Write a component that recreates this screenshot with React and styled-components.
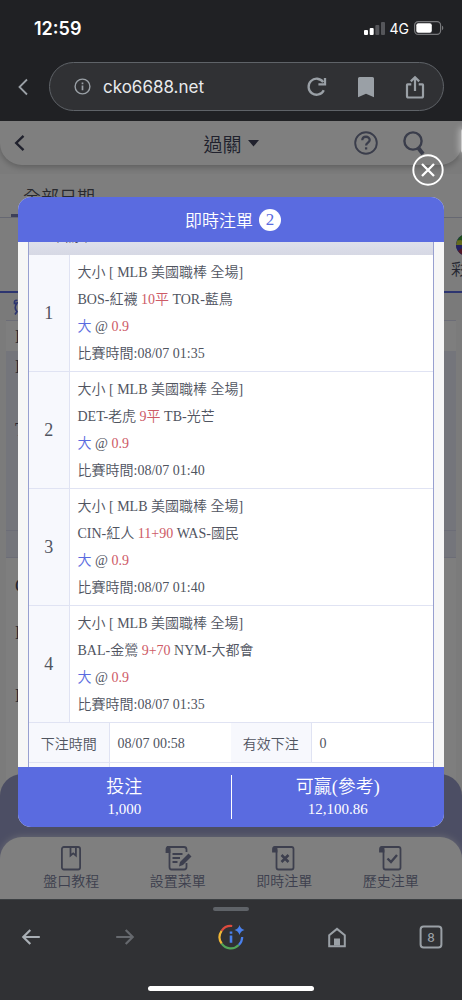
import { Fragment } from "react";
import styled, { createGlobalStyle } from "styled-components";

const accent = "#5a6be0";
const line = "#e0e3f3";
const chromeGrey = "#9aa0a6";
const ui = `Inter, "Noto Sans CJK TC", sans-serif`;
const serif = `"Liberation Serif", "Noto Sans CJK TC", serif`;

const GlobalStyle = createGlobalStyle`
  * {
    box-sizing: border-box;
  }

  body {
    margin: 0;
    background: #202124;
    font-family: ${serif};
    font-weight: 350;
  }

  button {
    padding: 0;
    border: none;
    background: none;
    font: inherit;
    color: inherit;
    cursor: pointer;
  }

  svg {
    display: block;
  }
`;

const Screen = styled.div`
  display: flex;
  flex-direction: column;
  height: 100vh;
  overflow: hidden;
`;

/* ---------- browser chrome ---------- */

const StatusBar = styled.div`
  display: flex;
  justify-content: space-between;
  align-items: center;
  height: 62px;
  padding: 0 18px 6px 34px;
  flex-shrink: 0;
  color: #fff;
  font-family: ${ui};
`;

const Clock = styled.span`
  font-size: 18px;
  font-weight: 600;
`;

const StatusIcons = styled.div`
  display: flex;
  align-items: center;
  gap: 5px;
  font-size: 14px;
  font-weight: 400;
`;

const AddressRow = styled.div`
  display: flex;
  align-items: center;
  padding: 0 18px 10px;
  flex-shrink: 0;
  color: ${chromeGrey};
`;

const BackButton = styled.button`
  width: 31px;
`;

const AddressPill = styled.div`
  display: flex;
  flex: 1;
  align-items: center;
  height: 49px;
  padding: 0 16px 0 24px;
  border: 1px solid #5f6368;
  border-radius: 25px;
  background: #303134;
`;

const Url = styled.span`
  flex: 1;
  padding-left: 12px;
  color: #e8eaed;
  font-family: ${ui};
  font-size: 17px;
  font-weight: 400;
`;

const PillButtons = styled.div`
  display: flex;
  gap: 25px;
`;

const Toolbar = styled.footer`
  display: flex;
  flex-direction: column;
  align-items: center;
  height: 101px;
  padding: 7px 19px 9px;
  flex-shrink: 0;
  border-top: 1px solid #3c4043;
  background: #303134;
  color: ${chromeGrey};
`;

const Grabber = styled.span`
  width: 36px;
  height: 4px;
  border-radius: 2px;
  background: #5f6368;
`;

const ToolbarButtons = styled.div`
  display: flex;
  justify-content: space-between;
  width: 100%;
  padding-top: 12px;
`;

const ToolbarGroup = styled.div`
  display: flex;
  gap: 80px;
`;

const HomeIndicator = styled.span`
  width: 166px;
  height: 5px;
  margin-top: auto;
  border-radius: 3px;
  background: #fff;
`;

/* ---------- page behind the dialog ---------- */

const Viewport = styled.main`
  position: relative;
  display: flex;
  flex-direction: column;
  flex: 1;
  min-height: 0;
  overflow: hidden;
  background: #f7f7f7;
  color: #4a4e63;
`;

const PageHeader = styled.header`
  display: flex;
  align-items: center;
  height: 44px;
  padding: 0 36px 0 14px;
  margin-bottom: 9px;
  flex-shrink: 0;
  border-radius: 0 0 22px 22px;
  background: #fff;
  box-shadow: 0 2px 6px rgba(0, 0, 0, 0.25);
`;

const HeaderSide = styled.div`
  display: flex;
  flex: 1;
  align-items: center;
  justify-content: ${({ $end }) => ($end ? "flex-end" : "flex-start")};
  gap: 24px;
  color: ${({ $end }) => ($end ? "#757b96" : "#40435a")};
`;

const PageTitle = styled.button`
  display: flex;
  align-items: center;
  gap: 6px;
  margin-left: 22px;
  color: #40435a;
  font-size: 19px;
`;

const EdgeHandle = styled.span`
  position: absolute;
  top: 8px;
  right: -4px;
  width: 5px;
  height: 24px;
  border-radius: 3px;
  background: #ccc;
  box-shadow: 0 0 6px 2px rgba(255, 255, 255, 0.4);
`;

const DateTabs = styled.div`
  display: flex;
  height: 44px;
  padding-left: 11px;
  flex-shrink: 0;
  border-bottom: 1px solid #cdd0e4;
  background: #fcfcfc;
`;

const DateTab = styled.button`
  padding: 3px 12px 0;
  border-bottom: 3px solid #7a80b0;
  color: #50525c;
  font-size: 18px;
`;

const SportTabs = styled.div`
  display: flex;
  justify-content: flex-end;
  height: 75px;
  flex-shrink: 0;
  border-bottom: 2px solid ${accent};
  background: #fafafa;
`;

const SportTab = styled.button`
  display: flex;
  flex-direction: column;
  align-items: center;
  padding-top: 16px;
  margin-right: -21px;
  font-size: 16px;
`;

const Notice = styled.div`
  height: 27px;
  padding: 6px 13px;
  flex-shrink: 0;
  background: #f5f5f5;
  color: ${accent};
`;

const MatchList = styled.div`
  margin: 0 6px;
  background: #fdfdfd;
  font-size: 18px;
`;

const MatchRow = styled.div`
  height: ${({ $height }) => $height}px;
  padding: 6px 9px;
  border-top: ${({ $plain }) => ($plain ? "none" : "1px solid #d8dbee")};
  background: ${({ $tint }) => ($tint ? "#e9ebf7" : "transparent")};
  line-height: 20px;
`;

const BottomPanel = styled.div`
  position: absolute;
  left: 0;
  right: 0;
  bottom: 0;
  padding-top: 63px;
  border-radius: 22px 22px 0 0;
  background: #999dc8;
`;

const BottomNav = styled.nav`
  display: grid;
  grid-template-columns: repeat(4, 1fr);
  height: 62px;
  padding: 9px 18px 0;
  border-radius: 22px 22px 0 0;
  background: #fff;
  box-shadow: 0 -1px 6px rgba(255, 255, 255, 0.5);
`;

const NavItem = styled.a`
  display: flex;
  flex-direction: column;
  align-items: center;
  color: #7a7f9c;
  font-size: 14px;
  line-height: 21px;
  text-decoration: none;
`;

/* ---------- dialog ---------- */

const Overlay = styled.div`
  position: absolute;
  inset: 0;
  display: flex;
  padding: 76px 18px 72px;
  background: rgba(0, 0, 0, 0.5);
`;

const CloseButton = styled.button`
  position: absolute;
  top: 33px;
  right: 18px;
`;

const Dialog = styled.section`
  display: flex;
  flex-direction: column;
  flex: 1;
  overflow: hidden;
  border-radius: 13px;
  background: #f6f6f6;
`;

const DialogTitle = styled.h2`
  display: flex;
  justify-content: center;
  align-items: center;
  gap: 6px;
  height: 45px;
  margin: 0;
  padding-left: 4px;
  flex-shrink: 0;
  background: ${accent};
  color: #fff;
  font-size: 17px;
  font-weight: 350;
`;

const Count = styled.span`
  width: 22px;
  height: 22px;
  border-radius: 50%;
  background: #fff;
  color: ${accent};
  line-height: 22px;
  text-align: center;
`;

const DialogBody = styled.div`
  flex: 1;
  min-height: 0;
  padding: 0 10px;
  overflow: hidden;
`;

const Slip = styled.div`
  margin-top: -24px;
  border: 1px solid #98a0d0;
  background: #fff;
  color: #50545f;
  font-size: 14px;
`;

const SlipHeader = styled.div`
  display: flex;
  justify-content: space-between;
  align-items: center;
  height: 36px;
  padding: 0 8px 4px 22px;
  background: linear-gradient(#eceef6, #d6d8e4);
`;

const SlipTable = styled.table`
  width: 100%;
  border-collapse: collapse;
  table-layout: fixed;
`;

const IndexCell = styled.th`
  width: 40px;
  padding: 0;
  border-right: 1px solid ${line};
  border-bottom: 1px solid ${line};
  background: #f7f8fd;
  font-size: 18px;
  font-weight: 350;
`;

const BetCell = styled.td`
  padding: 4px 8px;
  border-bottom: 1px solid ${line};
  line-height: 27px;
`;

const LabelCell = styled.th`
  width: 80px;
  height: 39px;
  padding: 2px 0 0;
  border-right: 1px solid ${line};
  border-bottom: 1px solid ${line};
  background: #f7f8fd;
  font-weight: 350;
`;

const ValueCell = styled.td`
  padding: 4px 8px 0;
  border-bottom: 1px solid ${line};
`;

const Red = styled.span`
  color: #cd5a66;
`;

const Blue = styled.span`
  color: ${accent};
`;

const Totals = styled.div`
  display: flex;
  height: 60px;
  padding: 8px 0;
  flex-shrink: 0;
  background: ${accent};
  color: #fff;
  text-align: center;
`;

const Total = styled.div`
  flex: 1;

  & + & {
    border-left: 1px solid #fff;
  }
`;

const TotalLabel = styled.div`
  font-size: 18px;
  line-height: 24px;
`;

const TotalValue = styled.div`
  font-size: 15px;
  line-height: 20px;
`;

const bets = [
  { home: "BOS-紅襪", point: "10平", away: "TOR-藍鳥", time: "08/07 01:35" },
  { home: "DET-老虎", point: "9平", away: "TB-光芒", time: "08/07 01:40" },
  { home: "CIN-紅人", point: "11+90", away: "WAS-國民", time: "08/07 01:40" },
  { home: "BAL-金鶯", point: "9+70", away: "NYM-大都會", time: "08/07 01:35" },
];

const infoCells = [
  ["下注時間", "08/07 00:58"],
  ["有效下注", "0"],
];

const matches = [
  { text: "B", height: 31 },
  { text: "B", height: 63, tint: true, plain: true },
  { text: "T", height: 116, tint: true, plain: true },
  { text: "", height: 27, tint: true },
  { text: "", height: 9 },
  { text: "C", height: 47, plain: true },
  { text: "D", height: 63, plain: true },
  { text: "D", height: 160, plain: true },
];

function SignalIcon() {
  return (
    <svg width="21" height="13" viewBox="0 0 21 13" fill="#fff">
      <rect x="0" y="8" width="4" height="5" rx="1" />
      <rect x="5.7" y="6" width="4" height="7" rx="1" />
      <rect x="11.3" y="3" width="4" height="10" rx="1" fill="#55565a" />
      <rect x="17" y="0" width="4" height="13" rx="1" fill="#55565a" />
    </svg>
  );
}

function BatteryIcon() {
  return (
    <svg width="30" height="14" viewBox="0 0 30 14">
      <rect x=".6" y=".6" width="26" height="12.8" rx="3.6" fill="none" stroke="#77787b" strokeWidth="1.2" />
      <rect x="2.3" y="2.3" width="15.5" height="9.4" rx="2" fill="#fff" />
      <path d="M28 4.8c1.7.5 1.7 3.9 0 4.4z" fill="#77787b" />
    </svg>
  );
}

function InfoIcon() {
  return (
    <svg width="17" height="17" viewBox="0 0 17 17" fill="none" stroke="currentColor" strokeWidth="1.4">
      <circle cx="8.5" cy="8.5" r="7.4" />
      <path d="M8.5 7.6v4.6M8.5 4.6v1.6" strokeWidth="1.7" />
    </svg>
  );
}

function ReloadIcon() {
  return (
    <svg width="24" height="24" viewBox="0 0 24 24" fill="none" stroke="currentColor" strokeWidth="2.3">
      <path d="M18.8 15.2A8 8 0 1 1 18.2 7.2" />
      <path d="M20 3v6.4h-6.6" />
    </svg>
  );
}

function BookmarkIcon() {
  return (
    <svg width="24" height="24" viewBox="0 0 24 24" fill="currentColor">
      <path d="M4 3.5Q4 2 5.5 2h13Q20 2 20 3.5V22.3l-8-3.5-8 3.5z" />
    </svg>
  );
}

function ShareIcon() {
  return (
    <svg width="24" height="24" viewBox="0 0 24 24" fill="none" stroke="currentColor" strokeWidth="2.2">
      <path d="M8.3 9.3H4.5Q4 9.3 4 10v11q0 1.5 1.5 1.5h13q1.5 0 1.5-1.5V10q0-.7-.5-.7h-3.8" />
      <path d="M12 16V2.6M7.8 6.4 12 2.2l4.2 4.2" />
    </svg>
  );
}

function AssistantIcon() {
  return (
    <svg width="28" height="28" viewBox="0 0 28 28" fill="none" strokeWidth="2.2">
      <path d="M4.6 7.8A11.2 11.2 0 0 1 15.2 3" stroke="#dc4b3e" />
      <path d="M4.6 7.8A11.2 11.2 0 0 0 4.7 20.6" stroke="#f0b736" />
      <path d="M4.7 20.6A11.2 11.2 0 0 0 21.8 22" stroke="#53a658" />
      <path d="M21.8 22A11.2 11.2 0 0 0 25.2 14" stroke="#4a80ec" />
      <path d="M14 12.5v7.3M14 8.6v2.2" stroke="#4a80ec" strokeWidth="2.6" />
      <path d="M22.5 2q1 4 5 5-4 1-5 5-1-4-5-5 4-1 5-5z" fill="#4a80ec" />
    </svg>
  );
}

function HomeIcon() {
  return (
    <svg width="24" height="28" viewBox="0 0 24 28">
      <path d="M4.2 12.3 12 5.9l7.800 6.400v11H4.200z" fill="none" stroke="currentColor" strokeWidth="2" />
      <path d="M9 15.500h6v7H9z" fill="currentColor" />
    </svg>
  );
}

function ArrowIcon({ flip }) {
  return (
    <svg width="24" height="28" viewBox="0 0 24 28" fill="none" stroke={flip ? "#66696e" : "#a9afb5"} strokeWidth="2.2">
      <path d={flip ? "M3.2 14h16.6M12.7 7l7 7-7 7" : "M20.8 14H4.2M11.3 7l-7 7 7 7"} />
    </svg>
  );
}

function TabsIcon() {
  return (
    <svg width="24" height="28" viewBox="0 0 24 28">
      <rect x="1.6" y="3.6" width="20.8" height="20.8" rx="3" fill="none" stroke="currentColor" strokeWidth="2" />
      <text x="12" y="18.5" textAnchor="middle" fontFamily="Inter, sans-serif" fontSize="12" fontWeight="500" fill="currentColor">
        8
      </text>
    </svg>
  );
}

function HelpIcon() {
  return (
    <svg width="24" height="24" viewBox="0 0 24 24" fill="none" stroke="currentColor" strokeWidth="1.9">
      <circle cx="12" cy="12" r="10.8" />
      <path d="M8.3 9.3c0-4.8 7.4-4.6 7.4-.3 0 2.7-3.6 2.6-3.6 5.5" strokeWidth="2.3" />
      <path d="M12.1 16.3v2.2" strokeWidth="2.3" />
    </svg>
  );
}

function SearchIcon() {
  return (
    <svg width="24" height="24" viewBox="0 0 24 24" fill="none" stroke="currentColor">
      <circle cx="11" cy="10" r="8.6" strokeWidth="2.4" />
      <path d="M16 16.5l5 6.5" strokeWidth="4" />
    </svg>
  );
}

function BallIcon() {
  return (
    <svg width="22" height="22" viewBox="0 0 22 22">
      <circle cx="11" cy="11" r="11" fill="#3a56c8" />
      <path d="M1 6.5A11 11 0 0 1 8 .5L11 11z" fill="#3d9a34" />
      <path d="M0 11 1 6.5 5 6l6 5z" fill="#c9d63c" />
      <path d="M0 11h11l-9 6Q0 14 0 11z" fill="#4a45c0" />
      <path d="M2 17l9-6-4 10Q3.5 19.5 2 17z" fill="#a8324e" />
    </svg>
  );
}

function RibbonIcon() {
  return (
    <svg width="18" height="16" viewBox="0 0 18 16" fill="none" stroke="currentColor" strokeWidth="1.7">
      <path d="M4.500 1.500Q1 .5 1.500 4.500L4 4Q.5 9 4 12.500L2 15.500" />
    </svg>
  );
}

/* the sheet shape shared by the bottom navigation icons */
function SheetIcon({ kind }) {
  return (
    <svg width="28" height="25" viewBox="0 0 28 25" fill="none" stroke="currentColor" strokeWidth="1.8">
      {kind === "book" ? (
        <>
          <rect x="4.9" y="1" width="18.2" height="22.5" rx="2" />
          <path d="M13.5 1v8.5l2.7-2.2 2.7 2.2V1" />
        </>
      ) : (
        <>
          <path d={kind === "edit" ? "M3 1h17q2.500 0 2.500 2.500V6M22.500 17v4q0 2.500-2.500 2.500H7.500q-2 0-2-2.500V3.500" : "M5 1h16.500q2 0 2 2v18.500q0 2-2 2h-13q-2 0-2-2V3.500"} />
          <path d={kind === "edit" ? "M5.500 6H2.500V3.500Q2.500 1 4 1h1.500z" : "M6.500 5.500H3V3.500Q3 1 4.700 1h1.800z"} fill="currentColor" />
        </>
      )}
      {kind === "edit" && (
        <>
          <path d="M8.5 8h10M8.5 12h7.5M8.5 16h5" />
          <path d="M15 20.5l1-4.5 8.5-8.5 3 3-8.5 8.5z" fill="currentColor" stroke="none" />
        </>
      )}
      {kind === "cancel" && <path d="M11.5 9l7 7M18.5 9l-7 7" strokeWidth="2.6" />}
      {kind === "check" && <path d="M10.5 12.5l3.5 3.5 6-7" strokeWidth="2.4" />}
    </svg>
  );
}

const navItems = [
  { kind: "book", label: "盤口教程" },
  { kind: "edit", label: "設置菜單" },
  { kind: "cancel", label: "即時注單" },
  { kind: "check", label: "歷史注單" },
];

function BetSlip() {
  return (
    <Slip>
      <SlipHeader>
        <span>串關單</span>
        <svg width="14" height="14" viewBox="0 0 14 14" fill="none" stroke="#9aa1c8" strokeWidth="1.5">
          <path d="M1 13l6-6 6 6" />
        </svg>
      </SlipHeader>
      <SlipTable>
        <tbody>
          {bets.map((bet, index) => (
            <tr key={bet.home}>
              <IndexCell scope="row">{index + 1}</IndexCell>
              <BetCell>
                <div>大小 [ MLB 美國職棒 全場]</div>
                <div>
                  {bet.home} <Red>{bet.point}</Red> {bet.away}
                </div>
                <div>
                  <Blue>大</Blue> @ <Red>0.9</Red>
                </div>
                <div>比賽時間:{bet.time}</div>
              </BetCell>
            </tr>
          ))}
        </tbody>
      </SlipTable>
      <SlipTable>
        <tbody>
          <tr>
            {infoCells.map(([label, value]) => (
              <Fragment key={label}>
                <LabelCell scope="row">{label}</LabelCell>
                <ValueCell>{value}</ValueCell>
              </Fragment>
            ))}
          </tr>
          <tr>
            <LabelCell as="td" />
            <ValueCell colSpan={3} />
          </tr>
        </tbody>
      </SlipTable>
    </Slip>
  );
}

export default function App() {
  return (
    <Screen>
      <GlobalStyle />
      <StatusBar>
        <Clock>12:59</Clock>
        <StatusIcons>
          <SignalIcon />
          <span>4G</span>
          <BatteryIcon />
        </StatusIcons>
      </StatusBar>
      <AddressRow>
        <BackButton aria-label="Back">
          <svg width="10" height="18" viewBox="0 0 10 18" fill="none" stroke="currentColor" strokeWidth="1.8">
            <path d="M9 1.5 1.5 9 9 16.5" />
          </svg>
        </BackButton>
        <AddressPill>
          <InfoIcon />
          <Url>cko6688.net</Url>
          <PillButtons>
            <button aria-label="Reload">
              <ReloadIcon />
            </button>
            <button aria-label="Bookmark">
              <BookmarkIcon />
            </button>
            <button aria-label="Share">
              <ShareIcon />
            </button>
          </PillButtons>
        </AddressPill>
      </AddressRow>

      <Viewport>
        <PageHeader>
          <HeaderSide>
            <button aria-label="返回">
              <svg width="11" height="18" viewBox="0 0 11 18" fill="none" stroke="currentColor" strokeWidth="2.4">
                <path d="M9.5 1.8 2.2 9l7.3 7.2" />
              </svg>
            </button>
          </HeaderSide>
          <PageTitle>
            過關
            <svg width="11" height="7" viewBox="0 0 11 7" fill="currentColor">
              <path d="M0 0h11L5.5 6.5z" />
            </svg>
          </PageTitle>
          <HeaderSide $end>
            <button aria-label="說明">
              <HelpIcon />
            </button>
            <button aria-label="搜尋">
              <SearchIcon />
            </button>
          </HeaderSide>
        </PageHeader>
        <DateTabs>
          <DateTab>全部日期</DateTab>
        </DateTabs>
        <SportTabs>
          <SportTab>
            <BallIcon />
            彩球
          </SportTab>
        </SportTabs>
        <Notice>
          <RibbonIcon />
        </Notice>
        <MatchList>
          {matches.map((match, index) => (
            <MatchRow key={index} $height={match.height} $tint={match.tint} $plain={match.plain}>
              {match.text}
            </MatchRow>
          ))}
        </MatchList>
        <BottomPanel>
          <BottomNav>
            {navItems.map((item) => (
              <NavItem key={item.kind} href="#">
                <SheetIcon kind={item.kind} />
                {item.label}
              </NavItem>
            ))}
          </BottomNav>
        </BottomPanel>

        <Overlay>
          <Dialog role="dialog" aria-label="即時注單">
            <DialogTitle>
              即時注單 <Count>2</Count>
            </DialogTitle>
            <DialogBody>
              <BetSlip />
            </DialogBody>
            <Totals>
              <Total>
                <TotalLabel>投注</TotalLabel>
                <TotalValue>1,000</TotalValue>
              </Total>
              <Total>
                <TotalLabel>可贏(參考)</TotalLabel>
                <TotalValue>12,100.86</TotalValue>
              </Total>
            </Totals>
          </Dialog>
          <CloseButton aria-label="關閉">
            <svg width="32" height="32" viewBox="0 0 32 32" fill="none" stroke="#fff" strokeWidth="1.9">
              <circle cx="16" cy="16" r="14.7" />
              <path d="M10 10l12 12M22 10 10 22" strokeWidth="2.3" />
            </svg>
          </CloseButton>
          <EdgeHandle />
        </Overlay>
      </Viewport>

      <Toolbar>
        <Grabber />
        <ToolbarButtons>
          <button aria-label="Back">
            <ArrowIcon />
          </button>
          <ToolbarGroup>
            <button aria-label="Forward">
              <ArrowIcon flip />
            </button>
            <button aria-label="Assistant">
              <AssistantIcon />
            </button>
            <button aria-label="Home">
              <HomeIcon />
            </button>
          </ToolbarGroup>
          <button aria-label="Tabs">
            <TabsIcon />
          </button>
        </ToolbarButtons>
        <HomeIndicator />
      </Toolbar>
    </Screen>
  );
}
